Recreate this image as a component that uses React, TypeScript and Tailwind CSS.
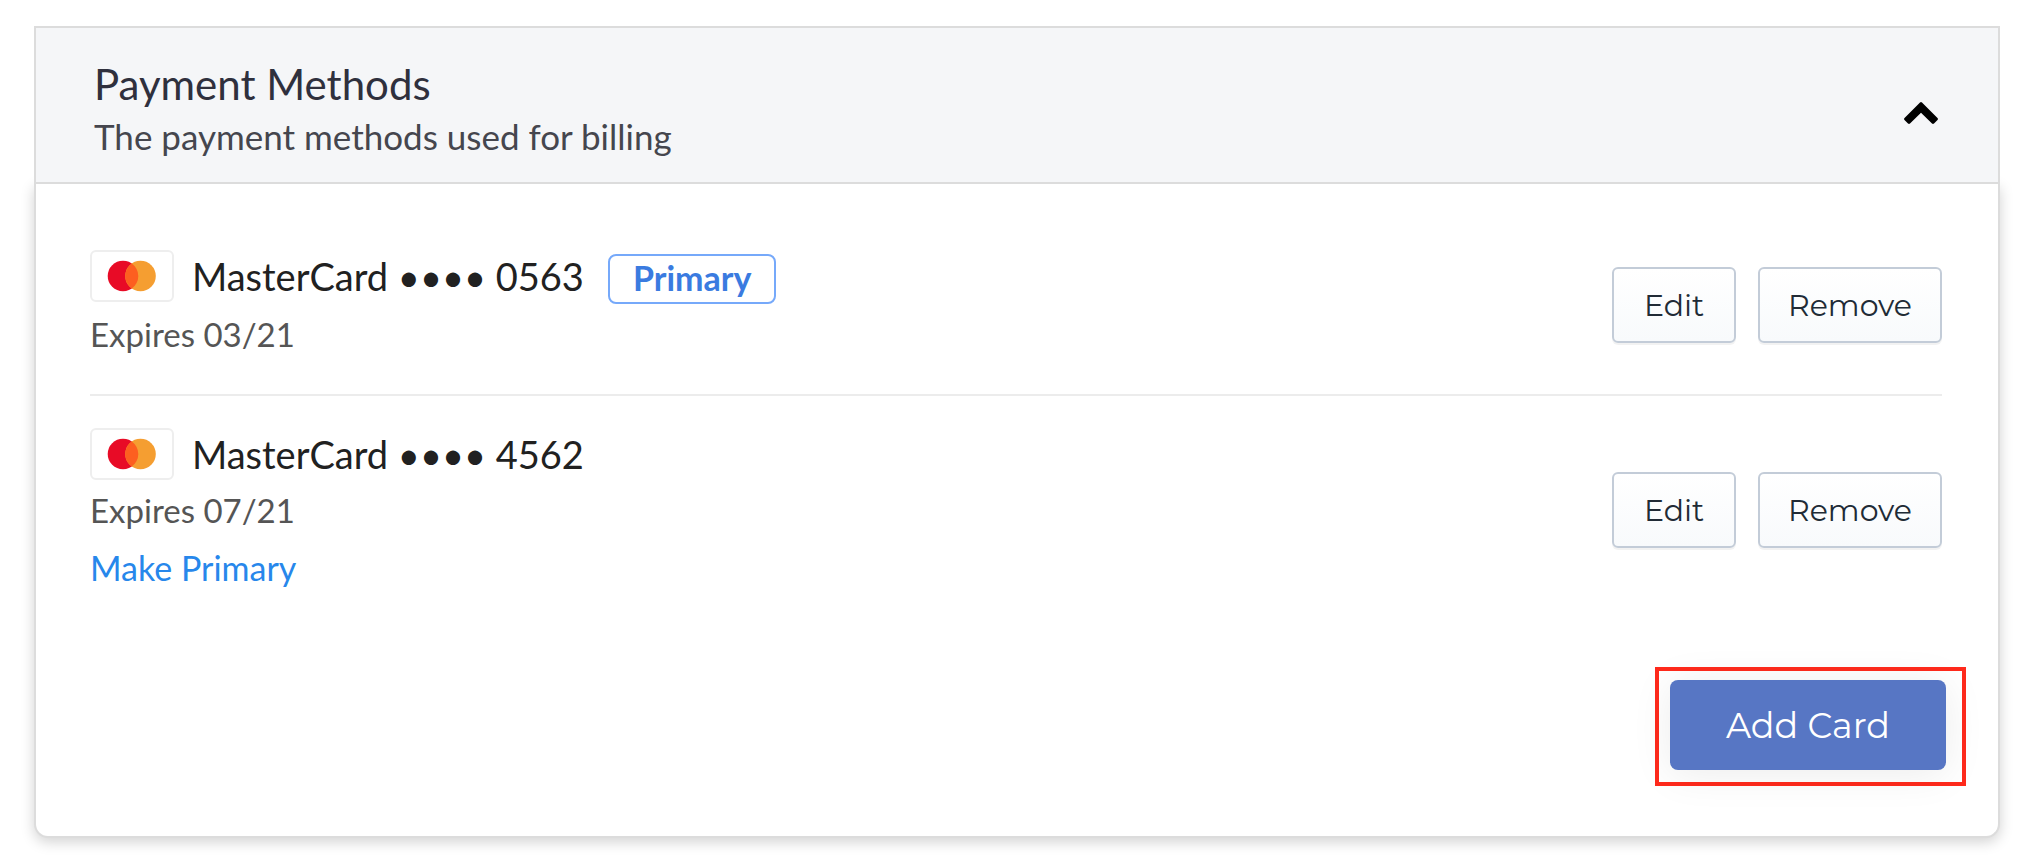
import React from 'react';

interface PaymentCard {
    id: string;
    brand: string;
    last4: string;
    expires: string;
    primary: boolean;
}

const cards: PaymentCard[] = [
    { id: 'card-0563', brand: 'MasterCard', last4: '0563', expires: '03/21', primary: true },
    { id: 'card-4562', brand: 'MasterCard', last4: '4562', expires: '07/21', primary: false },
];

const ChevronUpIcon: React.FC = () => (
    <svg className="w-[34px] h-[22px]" viewBox="0 0 34 22" aria-hidden="true">
        <path d="M16 .4q1-.8 2 0L33.5 16q.9 1 0 2L30 21.6q-1 .8-2 0L17 10.8 6 21.6q-1 .8-2 0L.5 18q-.9-1 0-2Z" fill="#000" />
    </svg>
);

const MasterCardIcon: React.FC = () => (
    <svg className="w-[50px] h-[32px]" viewBox="0 0 50 32" aria-hidden="true">
        <circle cx="16" cy="16" r="15.3" fill="#e80b26" />
        <circle cx="33.5" cy="16" r="15.3" fill="#f59e31" />
        <path d="M24.75 3.45a15.3 15.3 0 0 1 0 25.1a15.3 15.3 0 0 1 0-25.1Z" fill="#fd5f20" />
    </svg>
);

const CardButton: React.FC<{ className: string; children: React.ReactNode }> = ({ className, children }) => (
    <button
        type="button"
        className={`${className} h-[76px] pt-0.5 rounded-md border-2 border-[#c3ccd8] bg-linear-to-b from-white to-[#f8fafc] shadow-[0_2px_0_rgba(0,0,0,0.05)] font-['Montserrat','Inter',sans-serif] text-[30px] leading-10 text-[#212b36]`}
    >
        {children}
    </button>
);

const CardRow: React.FC<{ card: PaymentCard }> = ({ card }) => (
    <li className="flex items-center justify-between pt-8 pb-[30px] border-b-2 border-[#ececec] last:border-b-0 last:pb-0">
        <div>
            <div className="flex items-start gap-6">
                <div className="flex items-center h-[52px] gap-[18px]">
                    <span className="flex items-center justify-center w-[84px] h-[52px] rounded-md border-2 border-[#eeeeee] bg-white">
                        <MasterCardIcon />
                    </span>
                    <span className="text-[38px] leading-[50px] text-[#212121]">
                        {card.brand} •••• {card.last4}
                    </span>
                </div>
                {card.primary && (
                    <span className="mt-1 h-[50px] px-[23px] rounded-lg border-2 border-[#76a9fa] text-[34px] leading-[44px] font-bold text-[#3a7be0]">
                        Primary
                    </span>
                )}
            </div>
            <p className="text-[33px] leading-[60px] text-[#555555]">Expires {card.expires}</p>
            {!card.primary && (
                <a href="#" className="block text-[34px] leading-[56px] text-[#2787eb]">Make Primary</a>
            )}
        </div>
        <div className="flex gap-[22px] mb-1">
            <CardButton className="w-[124px]">Edit</CardButton>
            <CardButton className="w-[184px]">Remove</CardButton>
        </div>
    </li>
);

export default function App() {
    return (
        <main className="bg-white pt-[26px] pb-6 pl-[34px] pr-7 font-['Lato',sans-serif]">
            <section>
                <header className="relative flex items-center justify-between pl-[58px] pr-[60px] pt-[30px] pb-5 border-2 border-[#dcdcdc] bg-[#f5f6f8]">
                    <div>
                        <h2 className="text-[42px] leading-[52px] text-[#2f303d]">Payment Methods</h2>
                        <p className="text-[35px] leading-[52px] text-[#45464e]">The payment methods used for billing</p>
                    </div>
                    <button type="button" aria-label="Collapse payment methods" className="pt-1.5">
                        <ChevronUpIcon />
                    </button>
                </header>
                <div className="pl-[54px] pt-[34px] pb-[50px] border-2 border-t-0 border-[#dcdcdc] rounded-b-[14px] bg-white shadow-[0_4px_14px_rgba(0,0,0,0.18)]">
                    <ul className="pr-14">
                        {cards.map((card) => (
                            <CardRow key={card.id} card={card} />
                        ))}
                    </ul>
                    <div className="flex justify-end mt-[71px] pr-8">
                        <div className="border-4 border-[#ff2a1c] pl-[11px] pr-4 pt-[9px] pb-3">
                            <button
                                type="button"
                                className="block h-[90px] w-[276px] pt-0.5 rounded-lg bg-[#5776c4] shadow-[0_4px_40px_rgba(0,0,0,0.08)] font-['Montserrat','Inter',sans-serif] text-[35px] leading-10 text-white"
                            >
                                Add Card
                            </button>
                        </div>
                    </div>
                </div>
            </section>
        </main>
    );
}
